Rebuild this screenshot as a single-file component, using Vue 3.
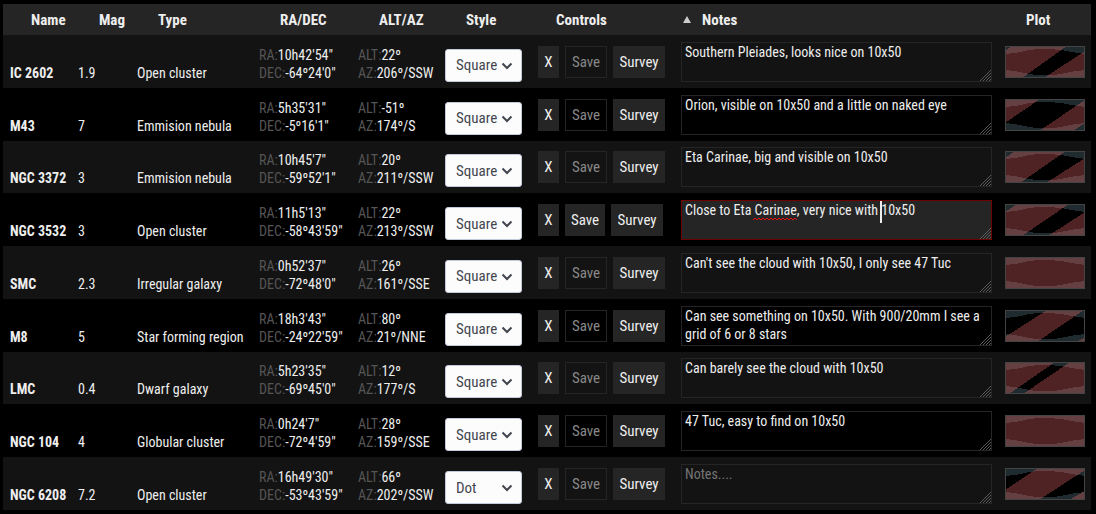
<script setup>
import { ref } from 'vue'

const columns = [
  { label: 'Name', key: 'name' },
  { label: 'Mag', key: 'mag' },
  { label: 'Type', key: 'type' },
  { label: 'RA/DEC', key: 'radec' },
  { label: 'ALT/AZ', key: 'altaz' },
  { label: 'Style', key: 'style' },
  { label: 'Controls', key: 'controls' },
  { label: 'Notes', key: 'notes', sorted: true },
  { label: 'Plot', key: 'plot' }
]

const full = ['0,0 80,0 80,32 0,32']

const rows = ref([
  { name: 'IC 2602', mag: '1.9', type: 'Open cluster', ra: `10h42'54"`, dec: `-64º24'0"`, alt: '22º', az: '206º/SSW', style: 'Square', notes: 'Southern Pleiades, looks nice on 10x50', plot: ['0,5 7,0 62,0 17,32 0,32', '80,5 80,32 39,32'] },
  { name: 'M43', mag: '7', type: 'Emmision nebula', ra: `5h35'31"`, dec: `-5º16'1"`, alt: '-51º', az: '174º/S', style: 'Square', notes: 'Orion, visible on 10x50 and a little on naked eye', plot: ['0,0 35,0 0,24', '80,1 80,24 68,32 34,32'] },
  { name: 'NGC 3372', mag: '3', type: 'Emmision nebula', ra: `10h45'7"`, dec: `-59º52'1"`, alt: '20º', az: '211º/SSW', style: 'Square', notes: 'Eta Carinae, big and visible on 10x50', plot: ['0,7 10,0 61,0 15,32 0,32', '80,7 80,32 41,32'] },
  { name: 'NGC 3532', mag: '3', type: 'Open cluster', ra: `11h5'13"`, dec: `-58º43'59"`, alt: '22º', az: '213º/SSW', style: 'Square', notes: 'Close to Eta Carinae, very nice with 10x50', editing: true, plot: ['0,8 12,0 64,0 17,32 0,32', '80,8 80,32 43,32'] },
  { name: 'SMC', mag: '2.3', type: 'Irregular galaxy', ra: `0h52'37"`, dec: `-72º48'0"`, alt: '26º', az: '161º/SSE', style: 'Square', notes: "Can't see the cloud with 10x50, I only see 47 Tuc", plot: full },
  { name: 'M8', mag: '5', type: 'Star forming region', ra: `18h3'43"`, dec: `-24º22'59"`, alt: '80º', az: '21º/NNE', style: 'Square', notes: 'Can see something on 10x50. With 900/20mm I see a grid of 6 or 8 stars', plot: ['42,0 79,0 32,32 0,32 0,27', '80,27 80,32 72,32'] },
  { name: 'LMC', mag: '0.4', type: 'Dwarf galaxy', ra: `5h23'35"`, dec: `-69º45'0"`, alt: '12º', az: '177º/S', style: 'Square', notes: 'Can barely see the cloud with 10x50', plot: ['0,0 50,0 4,32 0,32', '65,0 80,0 80,32 18,32'] },
  { name: 'NGC 104', mag: '4', type: 'Globular cluster', ra: `0h24'7"`, dec: `-72º4'59"`, alt: '28º', az: '159º/SSE', style: 'Square', notes: '47 Tuc, easy to find on 10x50', plot: full },
  { name: 'NGC 6208', mag: '7.2', type: 'Open cluster', ra: `16h49'30"`, dec: `-53º43'59"`, alt: '66º', az: '202º/SSW', style: 'Dot', notes: '', plot: ['33,0 80,0 80,2 34,32 0,32 0,22', '80,23 80,32 64,32'] }
])
</script>

<template>
  <main class="catalog">
    <table>
      <colgroup>
        <col v-for="c in columns" :key="c.key" :class="'col-' + c.key" />
      </colgroup>
      <thead>
        <tr>
          <th v-for="c in columns" :key="c.key" scope="col">
            <span class="head">
              <span class="sort">
                <svg v-if="c.sorted" width="8" height="7" viewBox="0 0 8 7" aria-hidden="true"><path d="M4 0 8 7H0z" fill="#ccc" /></svg>
              </span>
              {{ c.label }}
            </span>
          </th>
        </tr>
      </thead>
      <tbody>
        <tr v-for="r in rows" :key="r.name">
          <th scope="row">{{ r.name }}</th>
          <td>{{ r.mag }}</td>
          <td>{{ r.type }}</td>
          <td class="coord">
            <div><span class="dim">RA:</span>{{ r.ra }}</div>
            <div><span class="dim">DEC:</span>{{ r.dec }}</div>
          </td>
          <td class="coord">
            <div><span class="dim">ALT:</span>{{ r.alt }}</div>
            <div><span class="dim">AZ:</span>{{ r.az }}</div>
          </td>
          <td>
            <div class="picker">
              <select v-model="r.style" :aria-label="'Style of ' + r.name">
                <option>Square</option>
                <option>Dot</option>
              </select>
              <svg class="chevron" width="12" height="8" viewBox="0 0 12 8" aria-hidden="true"><path d="M1.5 1.5 6 6 10.5 1.5" fill="none" stroke="#43464f" stroke-width="2" /></svg>
            </div>
          </td>
          <td>
            <div class="controls">
              <button type="button" class="remove">X</button>
              <button type="button" class="save" :disabled="!r.editing">Save</button>
              <button type="button" class="survey">Survey</button>
            </div>
          </td>
          <td>
            <div class="note" :class="{ editing: r.editing }">
              <textarea v-model="r.notes" rows="2" placeholder="Notes...." spellcheck="false" :aria-label="'Notes on ' + r.name"></textarea>
              <svg class="grip" width="11" height="11" viewBox="0 0 11 11" aria-hidden="true"><path d="M0 11 11 0M3 11 11 3M6 11 11 6M9 11 11 9" fill="none" stroke="#5a5a5a" /></svg>
              <template v-if="r.editing">
                <svg class="squiggle" width="44" height="4" viewBox="0 0 44 4" aria-hidden="true"><path d="M0 3 2 1 4 3 6 1 8 3 10 1 12 3 14 1 16 3 18 1 20 3 22 1 24 3 26 1 28 3 30 1 32 3 34 1 36 3 38 1 40 3 42 1 44 3" fill="none" stroke="#f01010" /></svg>
                <span class="caret"></span>
              </template>
            </div>
          </td>
          <td>
            <svg class="plot" width="80" height="32" viewBox="0 0 80 32" shape-rendering="crispEdges" role="img" :aria-label="'Visibility of ' + r.name">
              <rect width="80" height="32" fill="#000" />
              <path d="M0 0H80V8Q66 6 56 4Q38 2 24 4Q14 7 0 8zM0 32H80V24Q68 25 56 28Q40 31 24 28Q12 25 0 24z" fill="#202b2f" />
              <polygon v-for="p in r.plot" :key="p" :points="p" fill="#ff7171" fill-opacity="0.31" />
              <path d="M0 0H80V32H0zM1 1V31H79V1z" fill="#444" fill-rule="evenodd" />
            </svg>
          </td>
        </tr>
      </tbody>
    </table>
  </main>
</template>

<style>
body {
  background: #000;
}
</style>

<style scoped>
.catalog {
  padding: 4px 5px 4px 3px;
  color: #eee;
  font: 14px/18px "Roboto Condensed", "Liberation Sans Narrow", "Roboto", sans-serif;
}
table {
  width: 100%;
  min-width: 960px;
  height: calc(100vh - 8px);
  table-layout: fixed;
  border-collapse: collapse;
}
.col-name { width: 68px; }
.col-mag { width: 59px; }
.col-type { width: 122px; }
.col-radec { width: 99px; }
.col-altaz { width: 87px; }
.col-style { width: 90px; }
.col-controls { width: 146px; }
.col-plot { width: 93px; }
thead tr {
  height: 31px;
  background: #252525;
}
tbody tr:nth-child(odd) {
  background: #131313;
}
th,
td {
  padding: 0 0 6px 7px;
  text-align: left;
  vertical-align: bottom;
  white-space: nowrap;
}
thead th {
  height: 31px;
  padding-bottom: 0;
  vertical-align: middle;
  font-size: 15px;
}
.head {
  display: flex;
  align-items: center;
}
.sort {
  display: flex;
  width: 19px;
  padding-left: 2px;
}
.dim {
  color: #555;
}
.picker {
  position: relative;
  width: 77px;
}
button,
select,
textarea {
  box-sizing: border-box;
  margin: 0;
  color: #eee;
  font: inherit;
}
button,
select {
  font-size: 15px;
}
select {
  display: block;
  width: 100%;
  height: 33px;
  padding: 0 10px;
  appearance: none;
  border: 1px solid #c4c9dc;
  border-radius: 3px;
  background: #fcfcfc;
  color: #43464f;
}
.chevron {
  position: absolute;
  top: 13px;
  right: 9px;
  pointer-events: none;
}
.controls {
  display: flex;
  gap: 6px;
  padding: 0 0 4px 3px;
}
button {
  height: 32px;
  padding: 0;
  border: 0;
  background: #252525;
}
.remove { width: 21px; }
.save { width: 40px; }
.survey { width: 52px; }
.save:disabled {
  width: 42px;
  border: 1px solid #252525;
  background: transparent;
  color: #888;
}
.note {
  position: relative;
  margin-right: 6px;
}
textarea {
  display: block;
  width: 100%;
  height: 40px;
  padding: 0 3px;
  overflow: hidden;
  resize: none;
  border: 1px solid #252525;
  border-radius: 0;
  background: transparent;
}
textarea::placeholder {
  color: #757575;
}
.editing textarea {
  border-color: #700000;
  background: #252525;
}
.grip {
  position: absolute;
  right: 1px;
  bottom: 1px;
  pointer-events: none;
}
.squiggle {
  position: absolute;
  top: 17px;
  left: 72px;
}
.caret {
  position: absolute;
  top: 1px;
  left: 199px;
  width: 2px;
  height: 22px;
  background: #eee;
}
.plot {
  display: block;
  margin-bottom: 4px;
}
</style>
